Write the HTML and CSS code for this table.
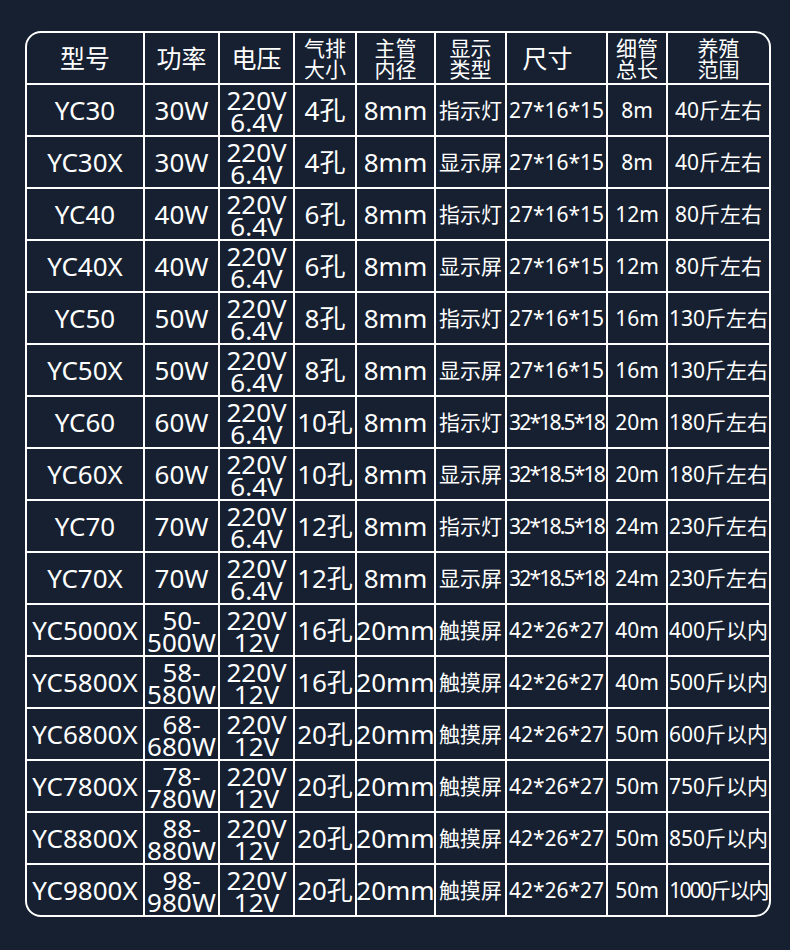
FILE: index.html
```html
<!DOCTYPE html>
<html lang="zh-CN">
<head>
    <meta charset="UTF-8">
    <meta name="viewport" content="width=device-width, initial-scale=1.0">
    <title>产品参数表</title>
    <link rel="stylesheet" href="styles.css">
</head>
<body>
    <div class="spec-table">
        <!-- header -->
        <div class="cell head">型号</div>
        <div class="cell head">功率</div>
        <div class="cell head">电压</div>
        <div class="cell head two">气排<br>大小</div>
        <div class="cell head two">主管<br>内径</div>
        <div class="cell head two">显示<br>类型</div>
        <div class="cell head size-head">尺寸</div>
        <div class="cell head two">细管<br>总长</div>
        <div class="cell head two">养殖<br>范围</div>

        <div class="cell">YC30</div>
        <div class="cell">30W</div>
        <div class="cell two">220V<br>6.4V</div>
        <div class="cell">4孔</div>
        <div class="cell">8mm</div>
        <div class="cell sm">指示灯</div>
        <div class="cell sm">27*16*15</div>
        <div class="cell sm">8m</div>
        <div class="cell sm">40斤左右</div>

        <div class="cell">YC30X</div>
        <div class="cell">30W</div>
        <div class="cell two">220V<br>6.4V</div>
        <div class="cell">4孔</div>
        <div class="cell">8mm</div>
        <div class="cell sm">显示屏</div>
        <div class="cell sm">27*16*15</div>
        <div class="cell sm">8m</div>
        <div class="cell sm">40斤左右</div>

        <div class="cell">YC40</div>
        <div class="cell">40W</div>
        <div class="cell two">220V<br>6.4V</div>
        <div class="cell">6孔</div>
        <div class="cell">8mm</div>
        <div class="cell sm">指示灯</div>
        <div class="cell sm">27*16*15</div>
        <div class="cell sm">12m</div>
        <div class="cell sm">80斤左右</div>

        <div class="cell">YC40X</div>
        <div class="cell">40W</div>
        <div class="cell two">220V<br>6.4V</div>
        <div class="cell">6孔</div>
        <div class="cell">8mm</div>
        <div class="cell sm">显示屏</div>
        <div class="cell sm">27*16*15</div>
        <div class="cell sm">12m</div>
        <div class="cell sm">80斤左右</div>

        <div class="cell">YC50</div>
        <div class="cell">50W</div>
        <div class="cell two">220V<br>6.4V</div>
        <div class="cell">8孔</div>
        <div class="cell">8mm</div>
        <div class="cell sm">指示灯</div>
        <div class="cell sm">27*16*15</div>
        <div class="cell sm">16m</div>
        <div class="cell sm">130斤左右</div>

        <div class="cell">YC50X</div>
        <div class="cell">50W</div>
        <div class="cell two">220V<br>6.4V</div>
        <div class="cell">8孔</div>
        <div class="cell">8mm</div>
        <div class="cell sm">显示屏</div>
        <div class="cell sm">27*16*15</div>
        <div class="cell sm">16m</div>
        <div class="cell sm">130斤左右</div>

        <div class="cell">YC60</div>
        <div class="cell">60W</div>
        <div class="cell two">220V<br>6.4V</div>
        <div class="cell">10孔</div>
        <div class="cell">8mm</div>
        <div class="cell sm">指示灯</div>
        <div class="cell sm tight">32*18.5*18</div>
        <div class="cell sm">20m</div>
        <div class="cell sm">180斤左右</div>

        <div class="cell">YC60X</div>
        <div class="cell">60W</div>
        <div class="cell two">220V<br>6.4V</div>
        <div class="cell">10孔</div>
        <div class="cell">8mm</div>
        <div class="cell sm">显示屏</div>
        <div class="cell sm tight">32*18.5*18</div>
        <div class="cell sm">20m</div>
        <div class="cell sm">180斤左右</div>

        <div class="cell">YC70</div>
        <div class="cell">70W</div>
        <div class="cell two">220V<br>6.4V</div>
        <div class="cell">12孔</div>
        <div class="cell">8mm</div>
        <div class="cell sm">指示灯</div>
        <div class="cell sm tight">32*18.5*18</div>
        <div class="cell sm">24m</div>
        <div class="cell sm">230斤左右</div>

        <div class="cell">YC70X</div>
        <div class="cell">70W</div>
        <div class="cell two">220V<br>6.4V</div>
        <div class="cell">12孔</div>
        <div class="cell">8mm</div>
        <div class="cell sm">显示屏</div>
        <div class="cell sm tight">32*18.5*18</div>
        <div class="cell sm">24m</div>
        <div class="cell sm">230斤左右</div>

        <div class="cell">YC5000X</div>
        <div class="cell two">50-<br>500W</div>
        <div class="cell two">220V<br>12V</div>
        <div class="cell">16孔</div>
        <div class="cell">20mm</div>
        <div class="cell sm">触摸屏</div>
        <div class="cell sm">42*26*27</div>
        <div class="cell sm">40m</div>
        <div class="cell sm">400斤以内</div>

        <div class="cell">YC5800X</div>
        <div class="cell two">58-<br>580W</div>
        <div class="cell two">220V<br>12V</div>
        <div class="cell">16孔</div>
        <div class="cell">20mm</div>
        <div class="cell sm">触摸屏</div>
        <div class="cell sm">42*26*27</div>
        <div class="cell sm">40m</div>
        <div class="cell sm">500斤以内</div>

        <div class="cell">YC6800X</div>
        <div class="cell two">68-<br>680W</div>
        <div class="cell two">220V<br>12V</div>
        <div class="cell">20孔</div>
        <div class="cell">20mm</div>
        <div class="cell sm">触摸屏</div>
        <div class="cell sm">42*26*27</div>
        <div class="cell sm">50m</div>
        <div class="cell sm">600斤以内</div>

        <div class="cell">YC7800X</div>
        <div class="cell two">78-<br>780W</div>
        <div class="cell two">220V<br>12V</div>
        <div class="cell">20孔</div>
        <div class="cell">20mm</div>
        <div class="cell sm">触摸屏</div>
        <div class="cell sm">42*26*27</div>
        <div class="cell sm">50m</div>
        <div class="cell sm">750斤以内</div>

        <div class="cell">YC8800X</div>
        <div class="cell two">88-<br>880W</div>
        <div class="cell two">220V<br>12V</div>
        <div class="cell">20孔</div>
        <div class="cell">20mm</div>
        <div class="cell sm">触摸屏</div>
        <div class="cell sm">42*26*27</div>
        <div class="cell sm">50m</div>
        <div class="cell sm">850斤以内</div>

        <div class="cell">YC9800X</div>
        <div class="cell two">98-<br>980W</div>
        <div class="cell two">220V<br>12V</div>
        <div class="cell">20孔</div>
        <div class="cell">20mm</div>
        <div class="cell sm">触摸屏</div>
        <div class="cell sm">42*26*27</div>
        <div class="cell sm">50m</div>
        <div class="cell sm tight">1000斤以内</div>
    </div>
</body>
</html>
```

FILE: styles.css
```css
* {
    margin: 0;
    padding: 0;
    box-sizing: border-box;
}

body {
    font-family: "Noto Sans", "Noto Sans CJK SC", sans-serif;
    background: #162030;
    color: #fff;
    width: 790px;
    height: 950px;
    padding: 31px 0 0 25px;
    overflow: hidden;
}

.spec-table {
    display: grid;
    grid-template-columns: 116px 73px 73px 60px 77px 69px 99px 58px 101px;
    grid-auto-rows: 50px;
    gap: 2px;
    width: 746px;
    background: #fff;
    border: 2px solid #fff;
    border-radius: 16px;
    overflow: hidden;
}

.cell {
    background: #162030;
    display: flex;
    align-items: center;
    justify-content: center;
    text-align: center;
    font-size: 26px;
    line-height: 1;
    white-space: nowrap;
}

.cell.two {
    line-height: 22px;
    padding-top: 1px;
}

.cell.sm {
    font-size: 21px;
}

.cell.tight {
    letter-spacing: -1.8px;
}

.cell.head {
    font-size: 25px;
}

.cell.head.two {
    font-size: 21px;
    line-height: 21px;
}

.cell.size-head {
    padding-right: 18px;
}
```
